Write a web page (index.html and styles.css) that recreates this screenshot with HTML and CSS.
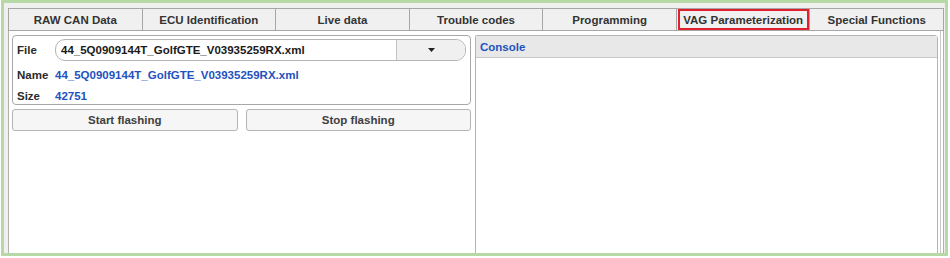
FILE: index.html
```html
<!DOCTYPE html>
<html>
<head>
<meta charset="utf-8">
<link rel="stylesheet" href="styles.css">
</head>
<body>
<div class="frame">
  <div class="tabs">
    <div class="tab">RAW CAN Data</div>
    <div class="tab">ECU Identification</div>
    <div class="tab">Live data</div>
    <div class="tab">Trouble codes</div>
    <div class="tab">Programming</div>
    <div class="tab marked">VAG Parameterization</div>
    <div class="tab">Special Functions</div>
  </div>
  <div class="pane">
    <div class="left">
      <div class="group">
        <div class="row file-row">
          <span class="label">File</span>
          <div class="combo">
            <span class="combo-text">44_5Q0909144T_GolfGTE_V03935259RX.xml</span>
            <span class="combo-btn"><svg width="7" height="4" viewBox="0 0 7 4"><path d="M0 0H7L3.5 4Z" fill="#222"/></svg></span>
          </div>
        </div>
        <div class="row info-row first-info">
          <span class="label">Name</span>
          <span class="value">44_5Q0909144T_GolfGTE_V03935259RX.xml</span>
        </div>
        <div class="row info-row">
          <span class="label">Size</span>
          <span class="value">42751</span>
        </div>
      </div>
      <div class="buttons">
        <div class="btn">Start flashing</div>
        <div class="btn">Stop flashing</div>
      </div>
    </div>
    <div class="console">
      <div class="console-head">Console</div>
      <div class="console-body"></div>
    </div>
    <div class="splitter"></div>
  </div>
</div>
</body>
</html>
```

FILE: styles.css
```css
* { box-sizing: border-box; }
html, body { margin: 0; padding: 0; background: #ffffff; }
body {
  font-family: "Liberation Sans", Arial, sans-serif;
  font-size: 11.5px;
  font-weight: bold;
  color: #2e2e2e;
}
.frame {
  width: 947px;
  height: 256px;
  margin-left: 1px;
  border: 3px solid #b6d9a6;
  background: #f0f0f0;
  padding: 5px 1px 0 4px;
  display: flex;
  flex-direction: column;
}
.tabs {
  display: flex;
  height: 23px;
  flex: none;
}
.tab {
  flex: 1;
  border: 1px solid #a6a6a6;
  border-left: none;
  background: #f0f0f0;
  display: flex;
  align-items: center;
  justify-content: center;
  color: #333;
  padding-top: 1px;
}
.tab:first-child { border-left: 1px solid #a6a6a6; }
.tab.marked {
  outline: 2px solid #e0202c;
  outline-offset: -3px;
}
.pane {
  flex: 1;
  display: flex;
  gap: 4px;
  padding: 4px 1px 0 3px;
  background: #ffffff;
  border-left: 1px solid #b0b0b0;
  border-right: 1px solid #b0b0b0;
  min-height: 0;
}
.left {
  width: 459px;
  display: flex;
  flex-direction: column;
  gap: 4px;
}
.group {
  height: 70px;
  border: 1px solid #a8a8a8;
  border-radius: 4px;
  background: #ffffff;
  padding: 3px 4px 0 4px;
}
.row {
  display: flex;
  align-items: center;
}
.label {
  width: 38px;
  flex: none;
  color: #2a2a2a;
}
.file-row { height: 22px; }
.combo {
  flex: 1;
  height: 22px;
  border: 1px solid #b4b4b4;
  border-radius: 10px;
  display: flex;
  overflow: hidden;
  background: #fff;
}
.combo-text {
  flex: 1;
  padding-left: 5px;
  display: flex;
  align-items: center;
  color: #1a1a1a;
}
.combo-btn {
  width: 69px;
  border-left: 1px solid #c4c4c4;
  background: #f0f0f0;
  display: flex;
  align-items: center;
  justify-content: center;
}
.info-row { height: 21px; }
.first-info { margin-top: 3px; }
.value { color: #2352c0; }
.buttons {
  display: flex;
  gap: 8px;
}
.btn {
  flex: 1;
  height: 22px;
  border: 1px solid #b4b4b4;
  border-radius: 3px;
  background: #f6f6f6;
  display: flex;
  align-items: center;
  justify-content: center;
  color: #404040;
}
.console {
  width: 463px;
  border: 1px solid #b4b4b4;
  border-bottom: none;
  border-radius: 2px 4px 0 0;
  display: flex;
  flex-direction: column;
  background: #fff;
}
.console-head {
  height: 22px;
  background: #e8e8e8;
  border-bottom: 1px solid #c8c8c8;
  color: #2352c0;
  padding-left: 4px;
  display: flex;
  align-items: center;
}
.console-body { flex: 1; }
.splitter {
  width: 1px;
  background: #c8c8c8;
  margin-left: -2px;
  margin-top: -4px;
}
```
